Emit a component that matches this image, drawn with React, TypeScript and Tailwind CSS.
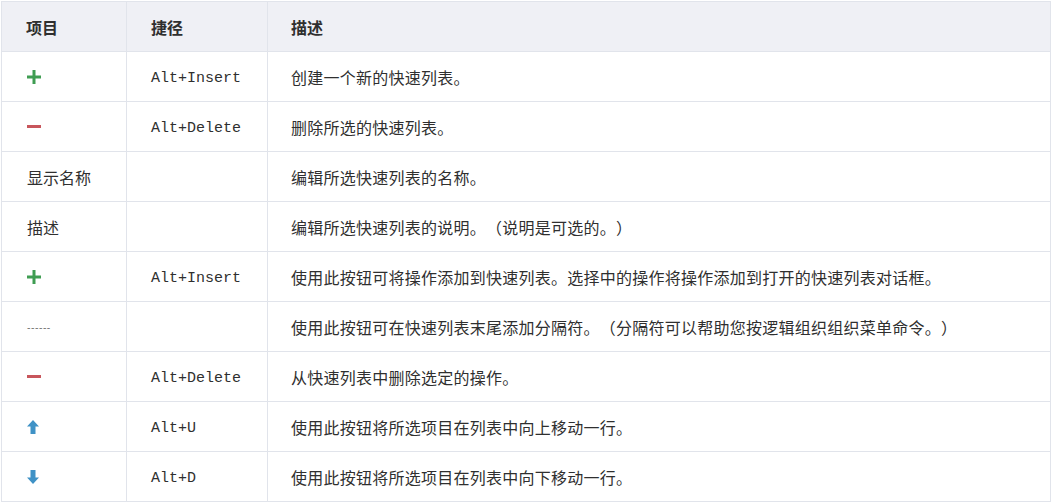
import React from "react";

type Row = { item: React.ReactNode; key?: string; desc: string };

const Plus = () => (
  <svg width="14" height="14" viewBox="0 0 14 14">
    <rect x="0" y="5.5" width="14" height="3" fill="#3f9d52" />
    <rect x="5.5" y="0" width="3" height="14" fill="#3f9d52" />
  </svg>
);

const Minus = () => (
  <svg width="14" height="3" viewBox="0 0 14 3">
    <rect x="0" y="0" width="14" height="3" fill="#c8565c" />
  </svg>
);

const Up = () => (
  <svg width="12" height="14" viewBox="0 0 12 14">
    <path d="M6 0 L12 6.5 L8.5 6.5 L8.5 14 L3.5 14 L3.5 6.5 L0 6.5 Z" fill="#3f92c6" />
  </svg>
);

const Down = () => (
  <svg width="12" height="14" viewBox="0 0 12 14">
    <path d="M6 14 L12 7.5 L8.5 7.5 L8.5 0 L3.5 0 L3.5 7.5 L0 7.5 Z" fill="#3f92c6" />
  </svg>
);

const ROWS: Row[] = [
  { item: <Plus />, key: "Alt+Insert", desc: "创建一个新的快速列表。" },
  { item: <Minus />, key: "Alt+Delete", desc: "删除所选的快速列表。" },
  { item: "显示名称", desc: "编辑所选快速列表的名称。" },
  { item: "描述", desc: "编辑所选快速列表的说明。（说明是可选的。）" },
  { item: <Plus />, key: "Alt+Insert", desc: "使用此按钮可将操作添加到快速列表。选择中的操作将操作添加到打开的快速列表对话框。" },
  {
    item: <span className="text-[10px] tracking-[0.5px] text-[#555]">------</span>,
    desc: "使用此按钮可在快速列表末尾添加分隔符。（分隔符可以帮助您按逻辑组织组织菜单命令。）",
  },
  { item: <Minus />, key: "Alt+Delete", desc: "从快速列表中删除选定的操作。" },
  { item: <Up />, key: "Alt+U", desc: "使用此按钮将所选项目在列表中向上移动一行。" },
  { item: <Down />, key: "Alt+D", desc: "使用此按钮将所选项目在列表中向下移动一行。" },
];

const cell = "flex items-center h-[50px] border-b border-r border-[#e1e4eb]";

export default function App() {
  return (
    <div
      className="bg-white w-[1052px] h-[504px] pt-px pl-px text-[16px] text-[#2f2f2f] [text-spacing-trim:space-all]"
      style={{ fontFamily: '"Noto Sans CJK SC", "Noto Sans", sans-serif' }}
    >
      <div className="w-[1050px] grid grid-cols-[125px_141px_1fr] border-l border-t border-[#e1e4eb]">
        <div className={`${cell} bg-[#eff0f5] pl-6 font-bold`}>项目</div>
        <div className={`${cell} bg-[#eff0f5] pl-6 font-bold`}>捷径</div>
        <div className={`${cell} bg-[#eff0f5] pl-[23px] font-bold`}>描述</div>
        {ROWS.map((r, i) => (
          <React.Fragment key={i}>
            <div className={`${cell} pl-[25px]`}>{r.item}</div>
            <div className={`${cell} pl-6 pt-[6px] font-['Liberation_Mono',monospace] text-[15px]`}>{r.key}</div>
            <div className={`${cell} pl-[23px] tracking-[0.25px]`}>{r.desc}</div>
          </React.Fragment>
        ))}
      </div>
    </div>
  );
}
